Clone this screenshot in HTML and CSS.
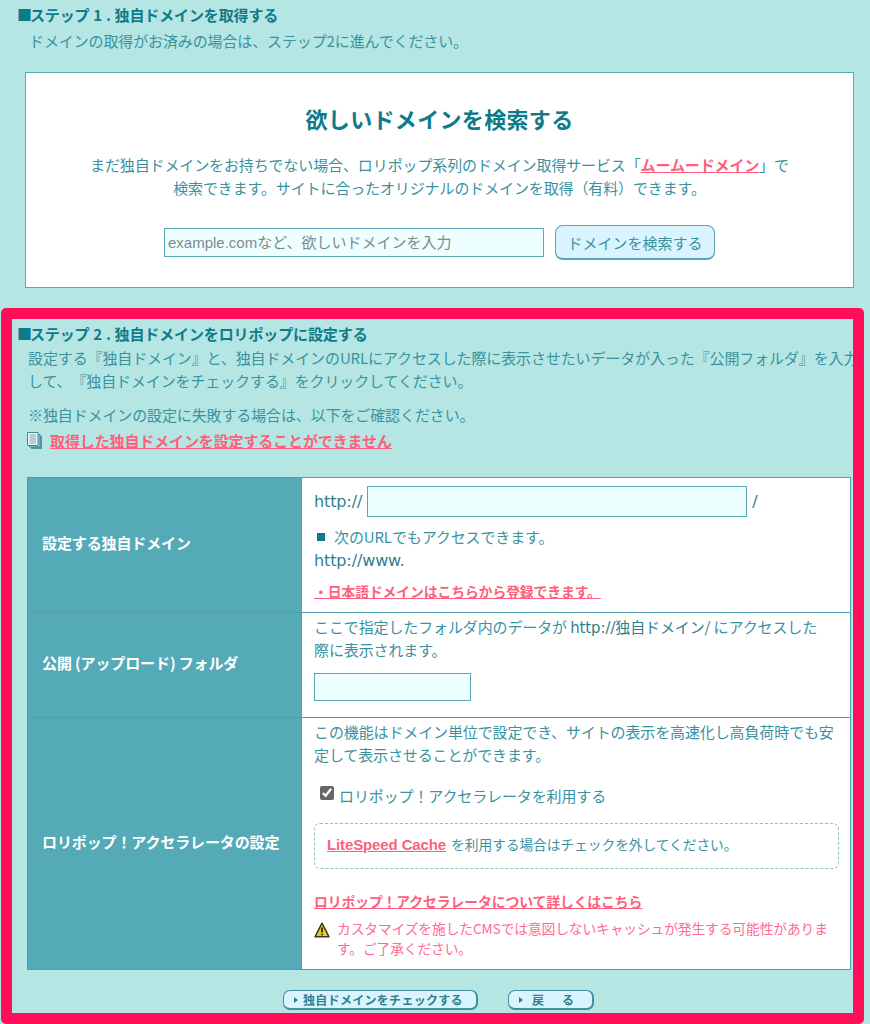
FILE: index.html
```html
<!DOCTYPE html>
<html lang="ja">
<head>
<meta charset="utf-8">
<title>独自ドメイン設定</title>
<link rel="stylesheet" href="styles.css">
</head>
<body>
<main class="page">
  <section class="step-one">
    <h2 class="step-title"><span class="mark">■</span>ステップ 1 . 独自ドメインを取得する</h2>
    <p class="step-lead">ドメインの取得がお済みの場合は、ステップ2に進んでください。</p>
    <div class="search-box">
      <h1 class="search-title">欲しいドメインを検索する</h1>
      <p class="search-text">まだ独自ドメインをお持ちでない場合、ロリポップ系列のドメイン取得サービス「<a class="link" href="#">ムームードメイン</a>」で<br>検索できます。サイトに合ったオリジナルのドメインを取得（有料）できます。</p>
      <form class="search-form">
        <input class="field field-search" type="text" placeholder="example.comなど、欲しいドメインを入力">
        <button class="search-button" type="button">ドメインを検索する</button>
      </form>
    </div>
  </section>

  <section class="step-two">
    <h2 class="step-title"><span class="mark">■</span>ステップ 2 . 独自ドメインをロリポップに設定する</h2>
    <p class="step-desc">設定する『独自ドメイン』と、独自ドメインのURLにアクセスした際に表示させたいデータが入った『公開フォルダ』を入力<br>して、『独自ドメインをチェックする』をクリックしてください。</p>
    <p class="step-note">※独自ドメインの設定に失敗する場合は、以下をご確認ください。</p>
    <p class="doc-link">
      <svg class="doc-icon" viewBox="0 0 16 17" aria-hidden="true">
        <path d="M4 4h11v13H4z" fill="#4f9aa6"/>
        <path d="M2.500 2.500h10.500v12.500H2.500z" fill="#9fd0d4" stroke="#3f8a96"/>
        <path d="M0.500 0.500h10.500v13H0.500z" fill="#eef8f8" stroke="#3f8a96"/>
        <path d="M2.500 3h6.500M2.500 5h6.500M2.500 7h6.500M2.500 9h6.500M2.500 11h6.500" stroke="#7fa3aa" fill="none"/>
      </svg>
      <a class="link" href="#">取得した独自ドメインを設定することができません</a>
    </p>

    <table class="settings">
      <tr class="row-domain">
        <th>設定する独自ドメイン</th>
        <td>
          <div class="domain-line"><span class="url">http://</span><input class="field field-domain" type="text"><span class="url">/</span></div>
          <p class="also"><span class="square"></span>次のURLでもアクセスできます。</p>
          <p class="www url">http://www.</p>
          <a class="link jp-link" href="#">・日本語ドメインはこちらから登録できます。</a>
        </td>
      </tr>
      <tr class="row-folder">
        <th>公開 (アップロード) フォルダ</th>
        <td>
          <p class="cell-text">ここで指定したフォルダ内のデータが <span class="url-inline">http://</span><span class="dark">独自ドメイン/</span> にアクセスした<br>際に表示されます。</p>
          <input class="field field-folder" type="text">
        </td>
      </tr>
      <tr class="row-accel">
        <th>ロリポップ！アクセラレータの設定</th>
        <td>
          <p class="cell-text">この機能はドメイン単位で設定でき、サイトの表示を高速化し高負荷時でも安定して表示させることができます。</p>
          <label class="check-line"><input class="check" type="checkbox" checked>ロリポップ！アクセラレータを利用する</label>
          <div class="notice"><a class="link" href="#">LiteSpeed Cache</a> を利用する場合はチェックを外してください。</div>
          <a class="link more-link" href="#">ロリポップ！アクセラレータについて詳しくはこちら</a>
          <div class="warning">
            <svg class="warn-icon" viewBox="0 0 16 16" aria-hidden="true">
              <path d="M8 1.200L15 14.800H1z" fill="#f2c81e" stroke="#3a3a2a" stroke-width="1.500" stroke-linejoin="round"/>
              <path d="M8 5.500v5M8 11.700v1.500" stroke="#2f2f20" stroke-width="1.800" fill="none"/>
            </svg>
            <p class="warning-text">カスタマイズを施したCMSでは意図しないキャッシュが発生する可能性があります。ご了承ください。</p>
          </div>
        </td>
      </tr>
    </table>

    <div class="actions">
      <button class="nav-button nav-check" type="button"><span class="arrow"></span>独自ドメインをチェックする</button>
      <button class="nav-button nav-back" type="button"><span class="arrow"></span>戻　る</button>
    </div>
  </section>
</main>
</body>
</html>
```

FILE: styles.css
```css
* { box-sizing: border-box; }
html, body { margin: 0; padding: 0; }
body {
  width: 870px;
  height: 1024px;
  overflow: hidden;
  background: #b5e6e3;
  color: #3a929f;
  font-family: "Noto Sans CJK JP", "Noto Sans", sans-serif;
  font-size: 15px;
  letter-spacing: -0.12px;
  text-spacing-trim: space-all;
}
p, h1, h2 { margin: 0; }
.page { width: 870px; }

.step-title {
  font-size: 15px;
  line-height: 20px;
  font-weight: 700;
  word-spacing: 0.6px;
  color: #0f7a8a;
  white-space: nowrap;
}
.mark { margin: 0 -2px 0 -1px; }
.step-one { height: 308px; padding: 5px 16px 0 18px; }
.step-lead { margin: 6px 0 0 11px; line-height: 20px; }

.search-box {
  margin: 21px 0 0 7px;
  width: 829px;
  height: 216px;
  border: 1px solid #55aab8;
  background: #fff;
  text-align: center;
}
.search-title {
  margin-top: 29px;
  font-size: 22px;
  line-height: 32px;
  font-weight: 700;
  letter-spacing: 0.33px;
  color: #0f7a8a;
}
.search-text { margin-top: 19px; line-height: 23px; white-space: nowrap; }
.link { color: #ff5f7c; font-weight: 700; text-decoration: underline; }
.search-form { display: flex; justify-content: center; align-items: center; gap: 11px; margin-top: 26px; }
.field { border: 1px solid #55aab8; background: #eeffff; border-radius: 0; outline: none; padding: 0 3px; font: inherit; }
.field-search {
  width: 380px;
  height: 29px;
  font-family: "Liberation Sans", "Noto Sans CJK JP", sans-serif;
  font-size: 15px;
}
.field-search::placeholder { color: #808a8c; opacity: 1; }
.search-button {
  width: 160px;
  height: 35px;
  padding: 0;
  border: 1px solid #5aa6b4;
  border-bottom-width: 2px;
  border-radius: 8px;
  background: #d9f3ff;
  color: #3a929f;
  font-family: inherit;
  font-size: 15px;
}

.step-two {
  width: 863px;
  height: 716px;
  margin-left: 1px;
  border: 11px solid #ff0f5a;
  border-radius: 5px;
  overflow: hidden;
  padding: 5px 0 0 6px;
}
.step-desc { margin: 2px 0 0 10px; line-height: 23px; white-space: nowrap; }
.step-note { margin: 11px 0 0 10px; line-height: 23px; }
.doc-link { display: flex; align-items: center; gap: 7px; margin: 3px 0 0 9px; height: 23px; }
.doc-icon { width: 16px; height: 17px; }

.settings {
  width: 824px;
  margin: 25px 0 0 9px;
  border-collapse: collapse;
  table-layout: fixed;
  background: #fff;
}
.settings th, .settings td { border: 1px solid #4f9fae; }
.settings th {
  width: 274px;
  padding: 0 0 5px 14px;
  background: #55aab8;
  color: #fff;
  font-size: 15px;
  font-weight: 700;
  text-align: left;
}
.settings td { padding: 0 12px; vertical-align: top; }
.row-domain { height: 135px; }
.row-folder { height: 105px; }
.row-accel { height: 252px; }

.url { font-family: "DejaVu Sans", sans-serif; font-size: 16px; color: #2f7f8d; }
.url-inline { font-family: "DejaVu Sans", sans-serif; font-size: 15px; line-height: 1; color: #2f7f8d; }
.domain-line { display: flex; align-items: center; gap: 5px; margin-top: 8px; height: 31px; }
.field-domain { width: 380px; height: 31px; }
.also { display: flex; align-items: center; margin-top: 8px; line-height: 23px; }
.square { width: 8px; height: 8px; margin: 0 9px 0 3px; background: #0f7a8a; }
.www { margin-top: 1px; line-height: 23px; }
.jp-link { display: inline-block; margin-top: 9px; line-height: 20px; font-size: 13.850px; }
.cell-text { margin-top: 2px; line-height: 23px; }
.dark { color: #2f7f8d; }
.field-folder { display: block; width: 157px; height: 28px; margin-top: 12px; }

.check-line { display: flex; align-items: center; margin: 18px 0 0 6px; height: 23px; }
.check { width: 14px; height: 14px; margin: 0 5px 6px 0; accent-color: #666; }
.notice {
  width: 525px;
  height: 46px;
  margin-top: 16px;
  padding-left: 12px;
  border: 1px dashed #8fc2c6;
  border-radius: 6px;
  line-height: 40px;
  font-size: 13.800px;
  white-space: nowrap;
}
.notice .link { font-family: "Liberation Sans", sans-serif; font-size: 15px; margin-right: 2px; }
.more-link { display: block; margin-top: 22px; line-height: 20px; font-size: 13.850px; }
.warning { display: flex; gap: 7px; margin-top: 7px; }
.warn-icon { flex: none; width: 16px; height: 16px; margin-top: 4px; }
.warning-text { color: #ff6b94; font-size: 13.750px; line-height: 20px; }

.actions { display: flex; gap: 30px; margin: 20px 0 0 265px; }
.nav-button {
  display: flex;
  align-items: center;
  height: 20px;
  padding: 0 0 0 10px;
  border: 2px solid #3f8f9d;
  border-top-width: 1px;
  border-left-width: 1px;
  border-radius: 7px;
  background: #d9f3ff;
  color: #2f7f8d;
  font-family: inherit;
  font-size: 12px;
  font-weight: 700;
  letter-spacing: 0.3px;
  white-space: nowrap;
}
.nav-check { width: 195px; }
.nav-back { width: 86px; letter-spacing: 3px; }
.nav-back .arrow { margin-right: 9px; }
.arrow {
  width: 0;
  height: 0;
  margin-right: 5px;
  border-left: 4px solid #2f7f8d;
  border-top: 3px solid transparent;
  border-bottom: 3px solid transparent;
}
```
